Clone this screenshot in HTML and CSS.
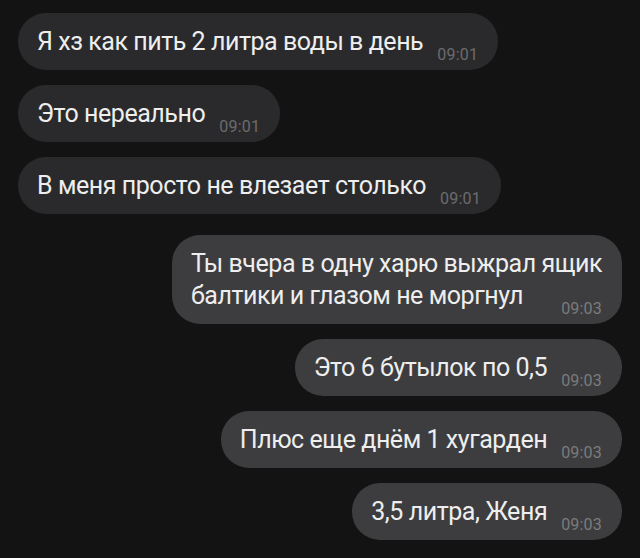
FILE: index.html
```html
<!DOCTYPE html>
<html lang="ru">
<head>
    <meta charset="UTF-8">
    <meta name="viewport" content="width=device-width, initial-scale=1.0">
    <title>Чат</title>
    <link rel="stylesheet" href="styles.css">
</head>
<body>
    <div class="chat">
        <div class="msg in">Я хз как пить 2 литра воды в день<span class="time">09:01</span></div>
        <div class="msg in">Это нереально<span class="time">09:01</span></div>
        <div class="msg in">В меня просто не влезает столько<span class="time">09:01</span></div>

        <div class="msg out first">Ты вчера в одну харю выжрал ящик<br>балтики и глазом не моргнул<span class="time">09:03</span></div>
        <div class="msg out">Это 6 бутылок по 0,5<span class="time">09:03</span></div>
        <div class="msg out">Плюс еще днём 1 хугарден<span class="time">09:03</span></div>
        <div class="msg out">3,5 литра, Женя<span class="time">09:03</span></div>
    </div>
</body>
</html>
```

FILE: styles.css
```css
body {
    margin: 0;
    background-color: #131313;
    font-family: Roboto, "Liberation Sans", sans-serif;
}

.chat {
    display: flex;
    flex-direction: column;
    gap: 15px;
    padding: 13px 18px;
}

.msg {
    display: flow-root;
    max-width: 480px;
    padding: 13px 20px 12px 19px;
    border-radius: 28px;
    font-size: 25px;
    line-height: 32px;
    letter-spacing: -0.45px;
    color: #eeeeee;
}

.msg.in {
    align-self: flex-start;
    background-color: #2a2a2c;
}

.msg.out {
    align-self: flex-end;
    background-color: #3d3d3f;
}

.msg.first {
    margin-top: 6px;
}

/* время сообщения прижато к правому нижнему углу */
.time {
    float: right;
    margin: 21px 0 -8px 14px;
    font-size: 16px;
    line-height: 16px;
    letter-spacing: 0.2px;
    color: #6c6c6e;
}

.out .time {
    color: #7b7b7d;
}
```
